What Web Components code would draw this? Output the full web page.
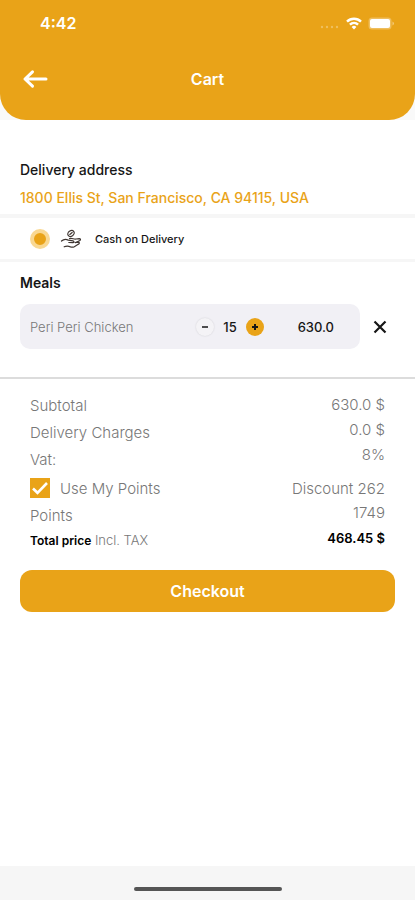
<!DOCTYPE html>
<html lang="en">
<head>
<meta charset="utf-8">
<meta name="viewport" content="width=device-width, initial-scale=1">
<title>Cart</title>
<style>
  :root{
    --brand:#e9a318;
    --ink:#161616;
    --muted:#777;
    --line:#f6f6f6;
    --gutter:20px;
  }
  body{
    margin:0;
    font-family:Inter, "Open Sans", sans-serif;
    font-size:14px;
    color:var(--ink);
    background:#fff;
  }
</style>
</head>
<body>
<cart-page>
  <app-header slot="header" time="4:42">Cart</app-header>
  <delivery-address>1800 Ellis St, San Francisco, CA 94115, USA</delivery-address>
  <payment-option>Cash on Delivery</payment-option>
  <meal-list>
    <meal-item qty="15" price="630.0">Peri Peri Chicken</meal-item>
  </meal-list>
  <order-summary></order-summary>
  <checkout-button>Checkout</checkout-button>
</cart-page>

<script>
class CartPage extends HTMLElement {
  constructor() {
    super();
    this.attachShadow({ mode: 'open' }).innerHTML = `
      <style>
        :host{display:flex;flex-direction:column;min-height:100vh}
        .top{background:#f9f9f9}
        main{flex:1;padding-top:40px}
        footer{
          height:34px;
          background:#f6f6f6;
          display:flex;
          justify-content:center;
          align-items:center;
        }
        .bar{width:148px;height:4px;margin-top:12px;border-radius:2px;background:#555}
      </style>
      <div class="top"><slot name="header"></slot></div>
      <main><slot></slot></main>
      <footer><div class="bar"></div></footer>
    `;
  }
}

class AppHeader extends HTMLElement {
  constructor() {
    super();
    this.attachShadow({ mode: 'open' }).innerHTML = `
      <style>
        :host{
          display:block;
          background:var(--brand);
          color:#fff;
          border-radius:0 0 26px 26px;
        }
        .status{
          height:46px;
          padding:0 20px 0 40px;
          display:flex;
          align-items:center;
          justify-content:space-between;
          font-size:16px;
          font-weight:600;
        }
        .icons{display:flex;align-items:center;gap:6px}
        svg{display:block}
        .nav{
          height:66px;
          padding:0 var(--gutter) 8px;
          display:grid;
          grid-template-columns:32px 1fr 32px;
          align-items:center;
        }
        button{padding:0;border:0;background:none;color:inherit;cursor:pointer}
        h1{margin:0;font-size:16px;font-weight:600;text-align:center}
      </style>
      <div class="status">
        <span id="time"></span>
        <div class="icons">
          <svg width="20" height="14" viewBox="0 0 20 14" fill="#fff" opacity=".3">
            <circle cx="2" cy="11" r="1.2"/><circle cx="7" cy="11" r="1.2"/>
            <circle cx="12" cy="11" r="1.2"/><circle cx="17" cy="11" r="1.2"/>
          </svg>
          <svg width="16" height="13" viewBox="0 0 16 13" fill="none" stroke="#fff" stroke-width="2.4">
            <path d="M1 4.6a10 10 0 0 1 14 0"/>
            <path d="M3.9 7.6a6 6 0 0 1 8.2 0"/>
            <path d="M8 12.6 5.6 9.9a3.4 3.4 0 0 1 4.8 0z" fill="#fff" stroke="none"/>
          </svg>
          <svg width="27" height="13" viewBox="0 0 27 13">
            <rect x=".5" y=".5" width="23" height="12" rx="3.5" fill="#fff" fill-opacity=".3"/>
            <rect x="2" y="2" width="20" height="9" rx="2" fill="#fff"/>
            <path d="M24.6 4.5a2.4 2.4 0 0 1 0 4z" fill="#fff" fill-opacity=".6"/>
          </svg>
        </div>
      </div>
      <div class="nav">
        <button type="button" aria-label="Back">
          <svg width="32" height="20" viewBox="0 0 32 20" fill="none" stroke="#fff" stroke-width="3" stroke-linecap="round" stroke-linejoin="round">
            <path d="M26 10H5M12.500 2.800 5 10l7.500 7.200"/>
          </svg>
        </button>
        <h1><slot></slot></h1>
      </div>
    `;
  }

  connectedCallback() {
    this.shadowRoot.getElementById('time').textContent = this.getAttribute('time');
  }
}

class DeliveryAddress extends HTMLElement {
  constructor() {
    super();
    this.attachShadow({ mode: 'open' }).innerHTML = `
      <style>
        :host{display:block;padding:0 var(--gutter) 6px}
        h2{margin:0 0 8px;font-size:14px;line-height:20px;font-weight:500}
        p{margin:0;line-height:20px;font-weight:500;color:var(--brand)}
      </style>
      <h2>Delivery address</h2>
      <p><slot></slot></p>
    `;
  }
}

class PaymentOption extends HTMLElement {
  constructor() {
    super();
    this.attachShadow({ mode: 'open' }).innerHTML = `
      <style>
        :host{
          display:block;
          border-top:4px solid var(--line);
          border-bottom:3px solid var(--line);
        }
        label{
          height:41px;
          padding:0 30px;
          display:flex;
          align-items:center;
          font-size:11px;
          font-weight:500;
          cursor:pointer;
        }
        input{
          appearance:none;
          width:20px;
          height:20px;
          margin:0 10px 0 0;
          border-radius:50%;
          border:4px solid #f9d892;
          background:#fff;
        }
        input:checked{background:var(--brand)}
        svg{margin-right:13px}
      </style>
      <label>
        <input type="radio" name="payment" checked>
        <svg width="22" height="20" viewBox="0 0 22 20" fill="none" stroke="#3f3632" stroke-width="1.2" stroke-linecap="round" stroke-linejoin="round">
          <ellipse cx="11" cy="4.500" rx="3.400" ry="2.700" transform="rotate(-35 11 4.500)"/>
          <path d="M9.800 5.400 12.200 3.600"/>
          <path d="M1.500 12c2-1.800 4.300-2.200 6.800-.9l4.700.7c1.400.4 1.200 1.700-.2 1.800l-4 -.1"/>
          <path d="M9.500 9.600c2.500-.8 4.300.9 6.500.4l3.200-.4c1.500 0 1.700 1.300.6 1.900l-4.300 2.200"/>
          <path d="M15 13.500l3.200-.3c1.400 0 1.500 1.300.4 1.900l-4.300 2.600c-1.300.7-2.400.7-3.800.2-2.400-1-3.900-1-6.300-.1"/>
        </svg>
        <span><slot></slot></span>
      </label>
    `;
  }
}

class MealList extends HTMLElement {
  constructor() {
    super();
    this.attachShadow({ mode: 'open' }).innerHTML = `
      <style>
        :host{
          display:block;
          padding:11px 0 28px var(--gutter);
          border-bottom:2px solid #dcdcdc;
        }
        h2{margin:0 0 11px;font-size:14px;line-height:20px;font-weight:600}
      </style>
      <h2>Meals</h2>
      <slot></slot>
    `;
  }
}

class MealItem extends HTMLElement {
  constructor() {
    super();
    this.attachShadow({ mode: 'open' }).innerHTML = `
      <style>
        :host{display:flex;align-items:center}
        .card{
          flex:1;
          height:45px;
          padding:0 26px 0 10px;
          border-radius:10px;
          background:#f1f0f5;
          display:flex;
          align-items:center;
          font-size:13px;
        }
        .name{flex:1;font-weight:300;color:var(--muted)}
        .stepper{display:flex;align-items:center;gap:8px}
        .qty{min-width:16px;text-align:center;font-weight:500}
        .price{width:70px;text-align:right;font-weight:500}
        button{padding:0;border:0;background:none;color:var(--ink);cursor:pointer}
        .step{
          width:18px;
          height:18px;
          border-radius:50%;
          display:grid;
          place-items:center;
        }
        .minus{background:#f4f3f6;box-shadow:0 0 2px rgba(0, 0, 0, .14)}
        .plus{background:var(--brand)}
        .remove{width:40px;height:40px;margin-right:15px;display:grid;place-items:center}
        svg{display:block}
      </style>
      <div class="card">
        <span class="name"><slot></slot></span>
        <div class="stepper">
          <button class="step minus" type="button" aria-label="Less">
            <svg width="8" height="8" viewBox="0 0 8 8" stroke="currentColor" stroke-width="1.500"><path d="M1 4h6"/></svg>
          </button>
          <span class="qty" id="qty"></span>
          <button class="step plus" type="button" aria-label="More">
            <svg width="8" height="8" viewBox="0 0 8 8" stroke="currentColor" stroke-width="2"><path d="M1 4h6M4 1v6"/></svg>
          </button>
        </div>
        <span class="price" id="price"></span>
      </div>
      <button class="remove" type="button" aria-label="Remove">
        <svg width="14" height="14" viewBox="0 0 14 14" stroke="currentColor" stroke-width="2.200"><path d="m1.500 1.500 11 11M12.500 1.500l-11 11"/></svg>
      </button>
    `;
  }

  connectedCallback() {
    const root = this.shadowRoot;
    const unit = this.getAttribute('price') / this.getAttribute('qty');
    let qty = Number(this.getAttribute('qty'));

    const refresh = () => {
      root.getElementById('qty').textContent = qty;
      root.getElementById('price').textContent = (unit * qty).toFixed(1);
    };

    root.querySelector('.minus').addEventListener('click', () => {
      qty = Math.max(1, qty - 1);
      refresh();
    });
    root.querySelector('.plus').addEventListener('click', () => {
      qty += 1;
      refresh();
    });
    root.querySelector('.remove').addEventListener('click', () => this.remove());
    refresh();
  }
}

class OrderSummary extends HTMLElement {
  constructor() {
    super();
    this.attachShadow({ mode: 'open' }).innerHTML = `
      <style>
        :host{
          display:block;
          padding:13px 30px 0;
          font-size:15px;
          font-weight:300;
          color:var(--muted);
        }
        .row, .charges{display:flex;justify-content:space-between}
        .labels{line-height:27px}
        .values{line-height:25px;text-align:right}
        .row{height:25px;line-height:25px}
        .row .value{line-height:20px}
        .use{height:30px;align-items:center}
        label{display:flex;align-items:center;gap:10px;cursor:pointer}
        .box{display:grid;width:20px;height:20px}
        .box > *{grid-area:1 / 1}
        input{appearance:none;width:20px;height:20px;margin:0;border:2px solid var(--brand)}
        input:checked{background:var(--brand)}
        .box svg{pointer-events:none}
        input:not(:checked) + svg{visibility:hidden}
        .total{font-size:13px}
        strong{font-size:12px;font-weight:600;color:#000}
        .total .value{font-weight:600;color:#000}
      </style>
      <div class="charges">
        <div class="labels">
          <div>Subtotal</div>
          <div>Delivery Charges</div>
          <div>Vat:</div>
        </div>
        <div class="values">
          <div>630.0 $</div>
          <div>0.0 $</div>
          <div>8%</div>
        </div>
      </div>
      <div class="row use">
        <label>
          <span class="box">
            <input type="checkbox" checked>
            <svg width="20" height="20" viewBox="0 0 20 20" fill="none" stroke="#fff" stroke-width="2.600"><path d="m3 10.500 4.500 4.300L17 5"/></svg>
          </span>
          Use My Points
        </label>
        <span>Discount 262</span>
      </div>
      <div class="row"><span>Points</span><span class="value">1749</span></div>
      <div class="row total">
        <span><strong>Total price</strong> Incl. TAX</span>
        <span class="value">468.45 $</span>
      </div>
    `;
  }
}

class CheckoutButton extends HTMLElement {
  constructor() {
    super();
    this.attachShadow({ mode: 'open' }).innerHTML = `
      <style>
        :host{display:block;padding:17px var(--gutter) 20px}
        button{
          width:100%;
          height:42px;
          border:0;
          border-radius:12px;
          background:var(--brand);
          color:#fff;
          font:inherit;
          font-size:16px;
          font-weight:600;
          cursor:pointer;
        }
      </style>
      <button type="button"><slot></slot></button>
    `;
  }
}

customElements.define('cart-page', CartPage);
customElements.define('app-header', AppHeader);
customElements.define('delivery-address', DeliveryAddress);
customElements.define('payment-option', PaymentOption);
customElements.define('meal-list', MealList);
customElements.define('meal-item', MealItem);
customElements.define('order-summary', OrderSummary);
customElements.define('checkout-button', CheckoutButton);
</script>
</body>
</html>
